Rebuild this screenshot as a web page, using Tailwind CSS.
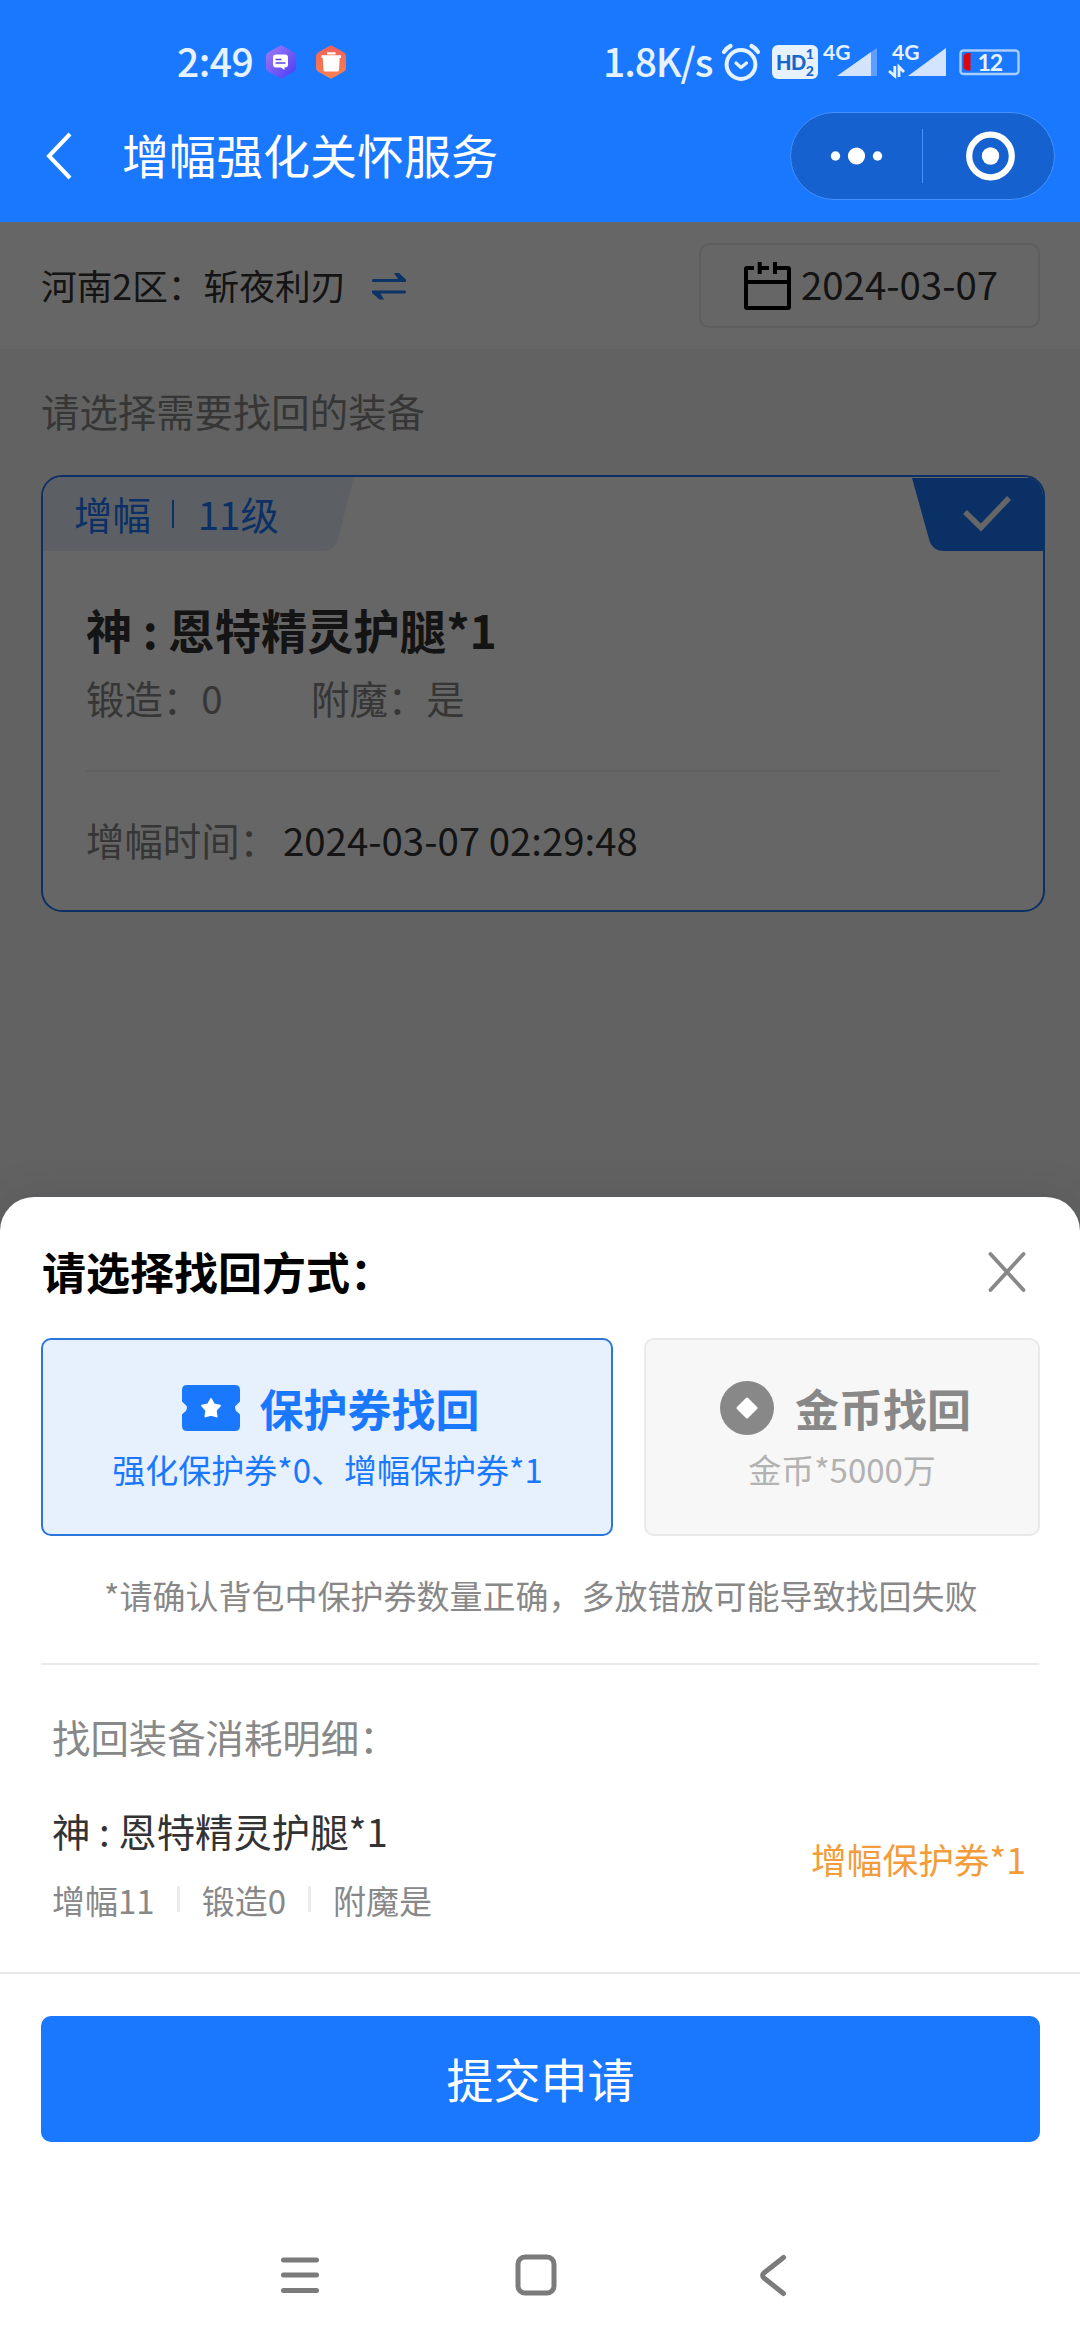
<!DOCTYPE html>
<html lang="zh-CN">
<head>
<meta charset="utf-8">
<title>增幅强化关怀服务</title>
<script src="https://cdn.jsdelivr.net/npm/@tailwindcss/browser@4"></script>
</head>
<body class="w-[1080px] h-[2340px] overflow-hidden bg-white font-['Noto_Sans_CJK_SC',sans-serif] text-[#333] whitespace-nowrap">

<!-- Header -->
<header class="h-[222px] bg-[#1a78ff] pt-[40px]">
  <div class="h-[44px] flex items-center text-[#e6f2ff]">
    <span class="ml-[177px] w-[89px] text-[39px] leading-[44px] mb-[4px] font-medium tracking-[-0.5px]">2:49</span>
    <svg class="w-[30px] h-[34px]" viewBox="0 0 30 34">
      <defs><linearGradient id="violet" x1="0" y1="0" x2="1" y2="1"><stop offset="0" stop-color="#a27cf5"/><stop offset="1" stop-color="#4a3bf5"/></linearGradient></defs>
      <path d="M13 1.200q2-1.200 4 0l11 6.300q2 1.200 2 3.500v12q0 2.300-2 3.500l-11 6.300q-2 1.200-4 0l-11-6.300q-2-1.200-2-3.500v-12q0-2.300 2-3.500z" fill="url(#violet)"/>
      <path d="M10 9.500h9q3 0 3 3v7q0 3-3 3h-.5v2.500l-3.500-2.500h-5q-3 0-3-3v-7q0-3 3-3z" fill="#fff"/>
      <path d="M9.500 14.500h6M9.500 18h10" stroke="#5a44e0" stroke-width="1.400"/>
    </svg>
    <svg class="ml-[20px] w-[30px] h-[34px]" viewBox="0 0 30 34">
      <defs><linearGradient id="coral" x1="0" y1="0" x2="0" y2="1"><stop offset="0" stop-color="#f0625a"/><stop offset="1" stop-color="#f98150"/></linearGradient></defs>
      <path d="M13 1.200q2-1.200 4 0l11 6.300q2 1.200 2 3.500v12q0 2.300-2 3.500l-11 6.300q-2 1.200-4 0l-11-6.300q-2-1.200-2-3.500v-12q0-2.300 2-3.500z" fill="url(#coral)"/>
      <path d="M11 7.200h8.500v2.300H11zM5.500 10.300h19.500v2.700h-1.300l-.7 12q-.1 1.500-1.600 1.500H9.100q-1.500 0-1.600-1.500l-.7-12H5.500z" fill="#fff"/>
    </svg>
    <span class="ml-[257px] w-[118px] text-[39px] leading-[44px] mb-[4px] font-medium tracking-[-1.1px]">1.8K/s</span>
    <svg class="w-[40px] h-[38px]" viewBox="0 0 40 38" fill="none" stroke="#e6f2ff" stroke-linecap="round" stroke-linejoin="round">
      <circle cx="20" cy="21.500" r="14.400" stroke-width="4"/>
      <path d="M15 20l5 4.500 5.500-4.500" stroke-width="3.200"/>
      <path d="M3 9q2.500-4 6.500-6M37 9q-2.500-4-6.500-6" stroke-width="4.200"/>
    </svg>
    <div class="ml-[11px] w-[46px] h-[34px] rounded-[6px] bg-[#e6f2ff] text-[#1a66cc] flex items-center justify-center font-['Lato',sans-serif] font-black">
      <span class="text-[20px] leading-[20px] tracking-[-0.5px]">HD</span>
      <span class="flex flex-col text-[14px] leading-[17px]"><span>1</span><span>2</span></span>
    </div>
    <svg class="ml-[5px] w-[56px] h-[46px]" viewBox="0 -5 56 46" font-family="Lato, sans-serif">
      <path d="M14 32L48 8v24z" fill="#d2e4ff"/><path d="M48 8l6-4v28h-6z" fill="#5c9fff"/>
      <text x="0" y="16" font-size="21" font-weight="700" fill="#e6f2ff">4G</text>
    </svg>
    <svg class="ml-[9px] w-[60px] h-[46px]" viewBox="0 -5 60 46" font-family="Lato, sans-serif">
      <path d="M20 32L58 4v28z" fill="#d2e4ff"/>
      <text x="4" y="16" font-size="21" font-weight="700" fill="#e6f2ff">4G</text>
      <path d="M6.800 22v10L1 27M11 33V23l5 5" fill="none" stroke="#e6f2ff" stroke-width="2.800"/>
    </svg>
    <svg class="ml-[11px] w-[62px] h-[38px]" viewBox="0 -5 62 38" font-family="Lato, sans-serif">
      <rect x="1.500" y="2.500" width="58" height="23.500" rx="3" fill="none" stroke="#a9cdff" stroke-width="2.400"/>
      <path d="M11.500 5v17.500h-3Q4.500 22 4.500 18V9.500q0-4 4-4.500z" fill="#e0040c"/>
      <text x="18.500" y="22.500" font-size="23" font-weight="700" fill="#e6f2ff" letter-spacing="-1">12</text>
    </svg>
  </div>
  <div class="mt-[28px] h-[88px] flex items-center text-white">
    <svg class="ml-[44px] w-[30px] h-[50px]" viewBox="0 0 30 50" fill="none" stroke="#fff" stroke-width="4"><path d="M26 3L5 25l21 22"/></svg>
    <h1 class="ml-[48px] w-[668px] text-[47px] leading-[82px] mb-[5px]">增幅强化关怀服务</h1>
    <div class="w-[265px] h-[88px] rounded-full bg-[#1561cf] border border-[#4590fa] flex items-center">
      <svg class="w-[131px] h-[52px]" viewBox="0 0 131 52" fill="#fff"><circle cx="44.500" cy="26" r="4.700"/><circle cx="65.500" cy="26" r="8.600"/><circle cx="86.500" cy="26" r="4.700"/></svg>
      <div class="w-px h-[54px] bg-[#4590fa]"></div>
      <svg class="w-[131px] h-[52px]" viewBox="0 0 131 52"><circle cx="67.500" cy="26" r="21.300" fill="none" stroke="#fff" stroke-width="6.200"/><circle cx="67.500" cy="26" r="8.700" fill="#fff"/></svg>
    </div>
  </div>
</header>

<!-- Dimmed page -->
<main class="relative h-[1011px] bg-[#f5f5f5]">
  <div class="h-[127px] bg-white pl-[41px] pr-[40px] flex items-center">
    <span class="text-[35.7px] leading-[52px] mb-[2px]">河南2区：斩夜利刃</span>
    <svg class="ml-[26px] w-[34px] h-[30px]" viewBox="0 0 34 30" fill="#1c80ff"><path d="M1 8h25l-4-6h5l7 6.500V11H1q-1 0-1-1.500T1 8zM33 22.500H8.500l3.500 6H7.500L0 22v-2.500h33q1 0 1 1.500t-1 1.500z"/></svg>
    <div class="ml-auto w-[341px] h-[85px] rounded-[10px] border-2 border-[#ebebeb] flex items-center">
      <svg class="ml-[43px] w-[47px] h-[48px]" viewBox="0 0 47 48" fill="none" stroke="#000" stroke-width="4"><path d="M10 6H3Q2 6 2 7v38q0 1 1 1h41q1 0 1-1V7q0-1-1-1H31M2 20h43M15.700 0v12M15.700 6H25M31 0v12"/></svg>
      <span class="ml-[10px] text-[38.4px] leading-[56px] mb-[5px]">2024-03-07</span>
    </div>
  </div>
  <p class="ml-[41px] mt-[33px] text-[38.4px] leading-[56px] text-[#888]">请选择需要找回的装备</p>
  <section class="ml-[41px] mt-[37px] w-[1004px] h-[437px] rounded-[21px] border-2 border-[#1a78ff] bg-white overflow-hidden">
    <div class="flex justify-between h-[74px]">
      <div class="relative w-[311px] h-[74px] text-[#1a78ff]">
        <svg class="absolute inset-0" width="311" height="74" viewBox="0 0 311 74"><path d="M0 0h311l-16 62q-3 12-15 12H0z" fill="#e6effa"/></svg>
        <div class="relative flex items-center pl-[31px] h-[71px] text-[38.4px] leading-[56px]">
          <span>增幅</span><span class="ml-[21px] mt-[3px] w-[2px] h-[28px] bg-[#1a78ff]"></span><span class="ml-[24px]">11级</span>
        </div>
      </div>
      <svg width="131" height="74" viewBox="0 0 131 74"><path d="M0 1h131v73H32q-12 0-15-12z" fill="#1a78ff"/><path d="M53 35l16 15.500L97 21" fill="none" stroke="#fff" stroke-width="5.500"/></svg>
    </div>
    <div class="px-[43px]">
      <h2 class="mt-[44px] text-[46.300px] leading-[68px] font-bold">神 : 恩特精灵护腿*1</h2>
      <div class="mt-[6px] flex text-[38.400px] leading-[56px] text-[#888]"><span class="w-[225px]">锻造：0</span><span>附魔：是</span></div>
      <div class="mt-[45px] h-[2px] bg-[#efefef]"></div>
      <div class="mt-[39px] flex text-[38.400px] leading-[56px]"><span class="w-[197px] text-[#888]">增幅时间：</span><span class="text-[#333]">2024-03-07 02:29:48</span></div>
    </div>
  </section>
  <div class="absolute inset-0 bg-black/60"></div>
</main>

<!-- Bottom sheet -->
<section class="relative -mt-[36px] h-[1143px] rounded-t-[34px] bg-white shadow-[0_0_40px_rgba(40,50,70,0.15)]">
  <div class="h-[141px] pl-[42px] pr-[53px] flex items-center justify-between">
    <h2 class="mt-[6px] text-[44px] leading-[64px] font-bold text-black">请选择找回方式：</h2>
    <svg class="mt-[8px] w-[40px] h-[42px]" viewBox="0 0 40 42" fill="none" stroke="#888" stroke-width="3.800" stroke-linecap="round"><path d="M3.500 3l33 36M36.500 3l-33 36"/></svg>
  </div>
  <div class="flex gap-[31px] pl-[41px]">
    <div class="w-[572px] h-[198px] rounded-[10px] border-2 border-[#2b76d9] bg-[#e7f1fd] flex flex-col items-center text-[#1a78ff]">
      <div class="mt-[34px] ml-[7px] h-[68px] flex items-center gap-[20px]">
        <svg class="w-[58px] h-[46px]" viewBox="0 0 58 46"><path d="M5 0h48q5 0 5 5v11q0 1-1.500 2-7 5 0 10 1.500 1 1.500 2v11q0 5-5 5H5q-5 0-5-5V30q0-1 1.500-2 7-5 0-10Q0 17 0 16V5q0-5 5-5z" fill="#1a78ff"/><path d="M29 14l3 5.500 6 1.200-4.200 4.600.8 6.200-5.600-1.500-5.600 1.500.8-6.200-4.200-4.600 6-1.200z" fill="#fff" stroke="#fff" stroke-width="1.800" stroke-linejoin="round"/></svg>
        <span class="text-[44px] leading-[64px] font-bold">保护券找回</span>
      </div>
      <span class="mt-[3px] ml-px text-[33px] leading-[48px]">强化保护券*0、增幅保护券*1</span>
    </div>
    <div class="w-[396px] h-[198px] rounded-[10px] border-2 border-[#e9e9e9] bg-[#f7f7f7] flex flex-col items-center text-[#888]">
      <div class="mt-[34px] ml-[7px] h-[68px] flex items-center gap-[21px]">
        <svg class="w-[54px] h-[54px]" viewBox="0 0 54 54"><circle cx="27" cy="27" r="27" fill="#888"/><path d="M27 18l9 9-9 9-9-9z" fill="#fff" stroke="#fff" stroke-width="3" stroke-linejoin="round"/></svg>
        <span class="text-[44px] leading-[64px] font-bold">金币找回</span>
      </div>
      <span class="mt-[3px] text-[33px] leading-[48px] text-[#b2b2b2]">金币*5000万</span>
    </div>
  </div>
  <p class="mt-[35px] pl-[104px] text-[33px] leading-[48px] text-[#888]">*请确认背包中保护券数量正确，多放错放可能导致找回失败</p>
  <div class="mt-[44px] mx-[41px] h-[2px] bg-[#ebebeb]"></div>
  <p class="mt-[43px] pl-[52px] text-[38.400px] leading-[56px] text-[#888]">找回装备消耗明细：</p>
  <div class="mt-[38px] pl-[52px] pr-[54px] flex items-center justify-between">
    <div>
      <div class="text-[38.400px] leading-[56px]">神 : 恩特精灵护腿*1</div>
      <div class="mt-[17px] flex items-center text-[33px] leading-[48px] text-[#888]">
        <span class="pt-px -mb-px">增幅11</span><span class="ml-[22px] mr-[22px] w-[3px] h-[26px] bg-[#ebebeb]"></span>
        <span class="pt-px -mb-px">锻造0</span><span class="ml-[22px] mr-[22px] w-[3px] h-[26px] bg-[#ebebeb]"></span>
        <span class="pt-px -mb-px">附魔是</span>
      </div>
    </div>
    <span class="mb-[8px] text-[35.700px] leading-[52px] text-[#f29c3b]">增幅保护券*1</span>
  </div>
  <div class="mt-[49px] h-[2px] bg-[#e8e8e8]"></div>
  <button class="block mt-[42px] ml-[41px] w-[999px] h-[126px] pb-[3px] rounded-[10px] bg-[#1a78ff] text-white text-[47px] leading-[68px]">提交申请</button>
  <nav class="mt-[111px] pl-[278px] flex items-center">
    <svg class="w-[44px] h-[44px]" viewBox="0 0 44 44" stroke="#7b7b7b" stroke-width="5" stroke-linecap="round"><path d="M5.500 7h33M5.500 22h33M5.500 37.500h33"/></svg>
    <svg class="ml-[192px] w-[44px] h-[44px]" viewBox="0 0 44 44" fill="none" stroke="#7b7b7b" stroke-width="5"><rect x="4" y="4" width="36" height="36" rx="7"/></svg>
    <svg class="ml-[195px] w-[44px] h-[44px]" viewBox="0 0 44 44" fill="none" stroke="#7b7b7b" stroke-width="5" stroke-linecap="round"><path d="M30.500 4.500L11.500 19.500q-3.500 3-.5 5.500L30.500 40.500"/></svg>
  </nav>
</section>
</body>
</html>
